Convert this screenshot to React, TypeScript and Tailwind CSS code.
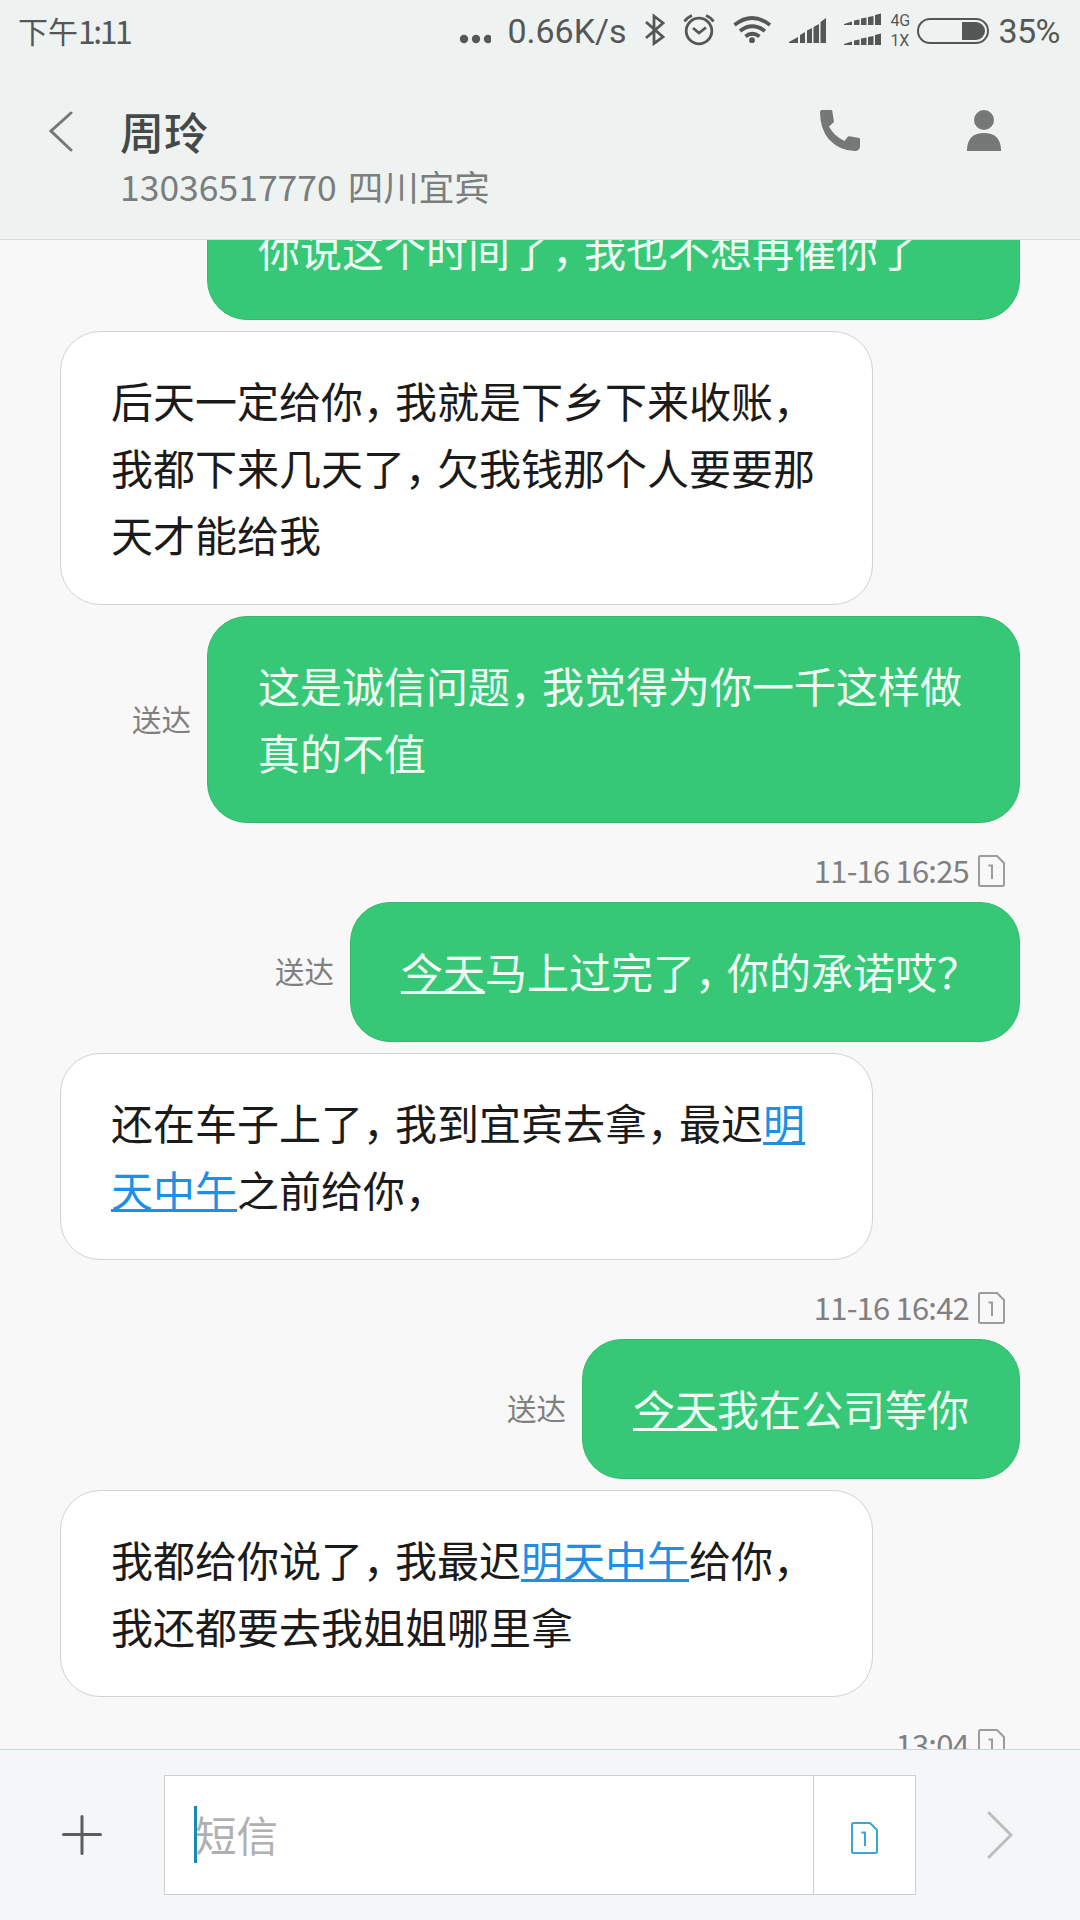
import React from "react";

interface BubbleProps {
    side: "in" | "out",
    delivered?: boolean,
    className?: string,
    children: React.ReactNode
}

// the comma takes less room than a full-width character
function Comma() {
    return <span className="tracking-[-10px]">，</span>;
}

function DateLink(props: { children: React.ReactNode, blue?: boolean }) {
    return (
        <span className={`underline decoration-[3px] underline-offset-[2px] [text-decoration-skip-ink:none] ${props.blue ? "text-[#1e8fe6]" : ""}`}>
            {props.children}
        </span>
    );
}

function SimIcon(props: { className?: string }) {
    return (
        <svg width="27" height="32" viewBox="0 0 27 32" fill="none" stroke="currentColor" strokeWidth="2" className={props.className}>
            <path d="M2.5 1H19L26 8V29.5Q26 31 24.5 31H2.5Q1 31 1 29.5V2.5Q1 1 2.5 1Z" />
            <path d="M10.5 10.5H14V24" />
        </svg>
    );
}

function Bubble(props: BubbleProps) {
    if (props.side === "in") {
        return (
            <div className={`flex pl-[60px] ${props.className ?? ""}`}>
                <div className="w-[813px] rounded-[40px] border border-[#d2d2d2] bg-white pt-[34px] pb-[37px] pl-[50px] text-[42px] leading-[67px] whitespace-nowrap text-[#1b1b1b]">
                    {props.children}
                </div>
            </div>
        );
    }
    return (
        <div className={`flex items-center justify-end gap-[16px] pr-[60px] ${props.className ?? ""}`}>
            {props.delivered && <span className="-mt-[2px] text-[29.5px] leading-none text-[#808080]">送达</span>}
            <div className="rounded-[40px] border border-[#35b86d] bg-[#36c876] pt-[34px] pb-[37px] pl-[50px] pr-[50px] text-[42px] leading-[67px] whitespace-nowrap text-[#f0fff5]">
                {props.children}
            </div>
        </div>
    );
}

function TimeStamp(props: { time: string }) {
    return (
        <div className="flex h-[79px] shrink-0 items-center justify-end gap-[9px] pr-[75px] pt-[17px] text-[#808080]">
            <span className="-mt-[3px] text-[31px] leading-none tracking-[-0.8px]">{props.time}</span>
            <SimIcon className="text-[#9c9c9c]" />
        </div>
    );
}

function StatusBar() {
    return (
        <div className="flex h-[62px] items-center pl-[18px] pr-[20px] text-[#555757]">
            <div className="-mt-[3px] flex flex-1 items-center leading-none">
                <span className="text-[30px]">下午</span>
                <span className="text-[32px] tracking-[-2.5px]">1:11</span>
            </div>
            <svg width="32" height="62" viewBox="459 0 32 62" fill="currentColor">
                <circle cx="464" cy="39" r="4.2" />
                <circle cx="476" cy="39" r="4.2" />
                <circle cx="488" cy="39" r="4.2" />
            </svg>
            <span className="ml-[16px] w-[120px] font-['Roboto',sans-serif] text-[34px] leading-none whitespace-nowrap">0.66K/s</span>
            {/* bluetooth, alarm, wifi and both signal meters */}
            <svg width="257" height="62" viewBox="627 0 257 62" fill="none" stroke="currentColor" strokeWidth="2.8">
                <path d="M646 22L663 37L654 43.500V16L663 23L646 38" />
                <circle cx="699" cy="31" r="12.8" />
                <path d="M693 28L699 33L706 27.500M684.500 21.500Q687 17.500 692 15.500M713.500 21.500Q711 17.500 706 15.500" />
                <path d="M734.500 25Q752 11 770 25M740 31Q752 21.500 765 31M745.500 36.500Q752 31 759.500 36.500" strokeWidth="3.800" />
                <circle cx="752" cy="40.200" r="2.900" fill="currentColor" stroke="none" />
                <g fill="currentColor" stroke="none">
                    <path d="M789 43V42L798 37V43ZM800 43V35L805 32V43ZM807 43V30.500L812 28V43ZM813.500 43V27L819 24V43ZM820.500 43V22L826 18V43Z" />
                    <path d="M844 25V24L852 21.500V25ZM854 25V20.500L859.500 19.500V25ZM861 25V18.500L866.500 17.500V25ZM868 25V17L873.500 16V25ZM875 25V15L881 13.500V25Z" />
                    <path d="M844 45V44L852 41.500V45ZM854 45V40.500L859.500 39.500V45ZM861 45V38.500L866.500 37.500V45ZM868 45V37L873.500 36V45ZM875 45V35L881 33.500V45Z" />
                </g>
            </svg>
            <div className="ml-[6px] flex w-[26px] flex-col gap-[4px] font-['Roboto',sans-serif] text-[16px] leading-[16px]">
                <span>4G</span>
                <span>1X</span>
            </div>
            <div className="ml-[1px] flex h-[26px] w-[72px] items-center justify-end rounded-full border-2 border-[#555757] pr-[2px]">
                <div className="h-[18px] w-[23px] rounded-r-full bg-[#555757]"></div>
            </div>
            <span className="ml-[9px] font-['Roboto',sans-serif] text-[34px] leading-none tracking-[-0.5px]">35%</span>
        </div>
    );
}

function Header() {
    return (
        <header className="h-[240px] shrink-0 border-b border-[#d3dad8] bg-[#eef3f2]">
            <StatusBar />
            <div className="flex items-start pt-[46px]">
                <svg width="24" height="42" viewBox="0 0 24 42" fill="none" stroke="#747877" strokeWidth="3" strokeLinecap="round" className="ml-[49px] mt-[2px]">
                    <path d="M22 3L2 21L22 40" />
                </svg>
                <div className="ml-[47px] flex-1">
                    <h1 className="-mt-[1px] text-[44px] leading-[48px] font-medium text-[#454a48]">周玲</h1>
                    <p className="mt-[10px] flex gap-[11px] text-[35.5px] leading-[42px] text-[#7a7f7d]">
                        <span>13036517770</span>
                        <span>四川宜宾</span>
                    </p>
                </div>
                <svg width="40" height="41" viewBox="0 0 40 41" fill="#747877" className="mt-[2px]">
                    <path d="M2 0H11Q12 0 12.300 1L14 12L9 16.500Q14 26 24.500 31L28 26.500Q28.500 26 29.500 26.200L39 28Q40 28 40 29V37Q39 41 35 41Q20 41 9 29.500Q0 19 0 2Q0 0 2 0Z" />
                </svg>
                <svg width="34" height="41" viewBox="0 0 34 41" fill="#747877" className="ml-[107px] mr-[79px] mt-[2px]">
                    <circle cx="17" cy="10" r="10" />
                    <path d="M0 41V39Q1 23 17 23Q33 23 34 39V41Z" />
                </svg>
            </div>
        </header>
    );
}

function Composer() {
    return (
        <footer className="flex h-[171px] shrink-0 items-start border-t border-[#cfd3d2] bg-[#f4f7f7] pt-[25px]">
            <svg width="40" height="40" viewBox="0 0 40 40" stroke="#5a5e5c" strokeWidth="3" strokeLinecap="round" className="ml-[62px] mt-[40px]">
                <path d="M20 1.500V38.500M1.500 19.500H38.500" />
            </svg>
            <div className="ml-[62px] flex h-[120px] w-[752px] border border-[#cdd0cf] bg-white">
                <div className="flex flex-1 items-center pl-[29px]">
                    <span className="mb-[1px] h-[57px] w-[3px] bg-[#168ab5]"></span>
                    <span className="-ml-[2px] -mt-[1px] text-[41.5px] leading-none text-[#b0b0b0]">短信</span>
                </div>
                <div className="flex w-[102px] items-center justify-center border-l border-[#cdd0cf]">
                    <SimIcon className="mt-[5px] text-[#3ba5d6]" />
                </div>
            </div>
            <svg width="26" height="50" viewBox="0 0 26 50" fill="none" stroke="#b9bdbc" strokeWidth="3" strokeLinecap="round" className="ml-[71px] mt-[35px]">
                <path d="M2 3L24 25L2 47" />
            </svg>
        </footer>
    );
}

export default function App() {
    return (
        <div className="flex h-[1920px] w-[1080px] flex-col overflow-hidden bg-[#f8f8f8] font-['Noto_Sans_CJK_SC',sans-serif]">
            <Header />
            <main className="flex min-h-0 flex-1 flex-col overflow-hidden">
                <Bubble side="out" className="-mt-[60px]">
                    <div className="w-[711px]">你说这个时间了<Comma />我也不想再催你了</div>
                </Bubble>
                <Bubble side="in" className="mt-[11px]">
                    后天一定给你<Comma />我就是下乡下来收账<Comma /><br />
                    我都下来几天了<Comma />欠我钱那个人要要那<br />
                    天才能给我
                </Bubble>
                <Bubble side="out" delivered className="mt-[11px]">
                    <div className="w-[711px]">
                        这是诚信问题<Comma />我觉得为你一千这样做<br />
                        真的不值
                    </div>
                </Bubble>
                <TimeStamp time="11-16 16:25" />
                <Bubble side="out" delivered>
                    <DateLink>今天</DateLink>马上过完了<Comma />你的承诺哎<span className="tracking-[-10px]">？</span>
                </Bubble>
                <Bubble side="in" className="mt-[11px]">
                    还在车子上了<Comma />我到宜宾去拿<Comma />最迟<DateLink blue>明</DateLink><br />
                    <DateLink blue>天中午</DateLink>之前给你<Comma />
                </Bubble>
                <TimeStamp time="11-16 16:42" />
                <Bubble side="out" delivered>
                    <DateLink>今天</DateLink>我在公司等你
                </Bubble>
                <Bubble side="in" className="mt-[11px]">
                    我都给你说了<Comma />我最迟<DateLink blue>明天中午</DateLink>给你<Comma /><br />
                    我还都要去我姐姐哪里拿
                </Bubble>
                <TimeStamp time="13:04" />
            </main>
            <Composer />
        </div>
    );
}
